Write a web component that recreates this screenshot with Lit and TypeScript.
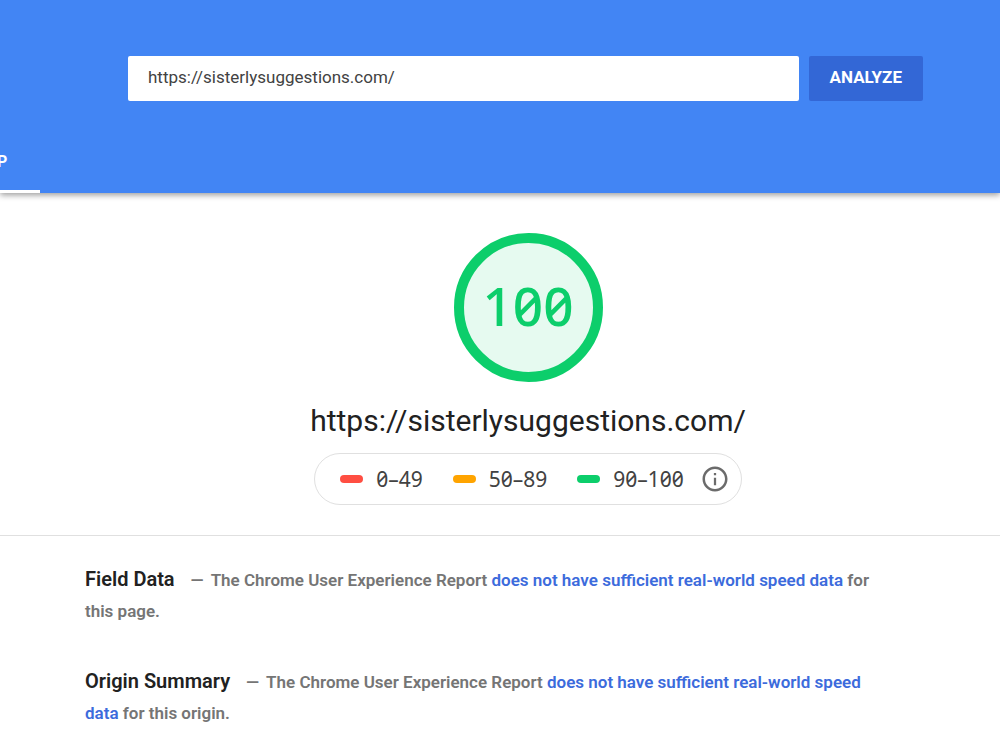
import { LitElement, html, css } from "lit";
import { customElement, property, state } from "lit/decorators.js";

const SITE = "https://sisterlysuggestions.com/";

@customElement("score-gauge")
class ScoreGauge extends LitElement {
  @property({ type: Number }) score = 0;

  static styles = css`
    :host {
      display: grid;
      place-items: center;
      box-sizing: border-box;
      width: 149px;
      height: 149px;
      padding-bottom: 3px;
      border: 10px solid #0cce6b;
      border-radius: 50%;
      background: #e6faf0;
      color: #0cce6b;
      font: 500 53px/60px "Noto Sans", sans-serif;
      font-feature-settings: "zero", "tnum";
    }
  `;

  render() {
    return html`<span>${this.score}</span>`;
  }
}

@customElement("score-scale")
class ScoreScale extends LitElement {
  static styles = css`
    :host {
      display: flex;
      align-items: center;
      box-sizing: border-box;
      height: 52px;
      padding: 0 11px 0 25px;
      border: 1px solid #e0e0e0;
      border-radius: 26px;
      color: #424242;
      font: 400 21px/24px "Noto Sans", sans-serif;
      font-feature-settings: "zero", "tnum";
    }
    .list {
      display: flex;
      gap: 30px;
      margin: 0;
      padding: 0;
      list-style: none;
    }
    .range {
      display: flex;
      align-items: center;
      gap: 13px;
    }
    .mark {
      width: 23px;
      height: 8px;
      border-radius: 4px;
    }
    .fail { background: #ff4e42; }
    .average { background: #ffa400; }
    .pass { background: #0cce6b; }
    .info {
      display: block;
      margin-left: 16px;
      padding: 0;
      border: 0;
      background: none;
      color: #6b6b6b;
      cursor: pointer;
    }
    .icon { display: block; }
  `;

  private ranges = [
    { kind: "fail", label: "0–49" },
    { kind: "average", label: "50–89" },
    { kind: "pass", label: "90–100" },
  ];

  render() {
    return html`
      <ul class="list">
        ${this.ranges.map(
          (r) => html`<li class="range"><span class="mark ${r.kind}"></span><span>${r.label}</span></li>`
        )}
      </ul>
      <button class="info" type="button" aria-label="About the score">
        <svg class="icon" width="30" height="30" viewBox="0 0 24 24" fill="currentColor" aria-hidden="true">
          <path d="M11.1 17h1.8v-6h-1.8v6zm.9-15C6.48 2 2 6.48 2 12s4.48 10 10 10 10-4.48 10-10S17.52 2 12 2zm0 18c-4.41 0-8-3.59-8-8s3.59-8 8-8 8 3.59 8 8-3.59 8-8 8zM11.1 9h1.8V7.2h-1.8V9z" />
        </svg>
      </button>
    `;
  }
}

@customElement("app-root")
class AppRoot extends LitElement {
  @state() private url = SITE;

  static styles = css`
    :host {
      display: block;
      min-height: 100vh;
      overflow: hidden;
      background: #fff;
      color: #212121;
      font-family: Roboto, sans-serif;
    }
    .header {
      background: #4285f4;
      box-shadow: 0 2px 6px rgba(0, 0, 0, 0.4);
    }
    .search {
      display: flex;
      gap: 10px;
      padding: 56px 77px 32px 128px;
    }
    .field {
      flex: 1;
      min-width: 0;
      box-sizing: border-box;
      height: 45px;
      padding: 0 20px 3px;
      border: 0;
      border-radius: 2px;
      background: #fff;
      color: #424242;
      font: 400 17px/24px Roboto, sans-serif;
    }
    .analyze {
      height: 45px;
      padding: 0 21px 3px;
      border: 0;
      border-radius: 2px;
      background: #3367d6;
      color: #fff;
      font: 700 17px/24px Roboto, sans-serif;
      cursor: pointer;
    }
    .tabs {
      display: flex;
      margin-left: -3px;
    }
    .tab {
      height: 60px;
      padding: 0 33px 0 0;
      border: 0;
      border-bottom: 3px solid #fff;
      background: none;
      color: #fff;
      font: 700 16px/24px Roboto, sans-serif;
      cursor: pointer;
    }
    .summary {
      display: flex;
      flex-direction: column;
      align-items: center;
      padding: 40px 0 30px 56px;
      border-bottom: 1px solid #e0e0e0;
    }
    .title {
      margin: 19px 0 13px;
      font-size: 30px;
      line-height: 39px;
      font-weight: 400;
    }
    .report {
      display: grid;
      gap: 40px;
      padding: 29px 110px 20px 85px;
    }
    .note {
      margin: 0;
      color: #757575;
      font-size: 17px;
      line-height: 31px;
      font-weight: 600;
    }
    .name {
      display: inline;
      margin: 0 16px 0 0;
      color: #212121;
      font-size: 20px;
      line-height: 24px;
      font-weight: 600;
    }
    .dash { margin-right: 7px; }
    .link {
      color: #3c6bdc;
      text-decoration: none;
    }
  `;

  private section(name: string, link: string, tail: string) {
    return html`<section class="note"><h2 class="name">${name}</h2><span class="dash">—</span>The Chrome User Experience Report <a class="link" href="#">${link}</a> ${tail}</section>`;
  }

  render() {
    return html`
      <header class="header">
        <form class="search" @submit=${(e: Event) => e.preventDefault()}>
          <input
            class="field"
            type="url"
            aria-label="Web page URL"
            .value=${this.url}
            @input=${(e: Event) => (this.url = (e.target as HTMLInputElement).value)}
          />
          <button class="analyze" type="submit">ANALYZE</button>
        </form>
        <nav class="tabs"><button class="tab" type="button">P</button></nav>
      </header>
      <main>
        <div class="summary">
          <score-gauge .score=${100}></score-gauge>
          <h1 class="title">${SITE}</h1>
          <score-scale></score-scale>
        </div>
        <div class="report">
          ${this.section("Field Data", "does not have sufficient real-world speed data", "for this page.")}
          ${this.section("Origin Summary", "does not have sufficient real-world speed data", "for this origin.")}
        </div>
      </main>
    `;
  }
}
